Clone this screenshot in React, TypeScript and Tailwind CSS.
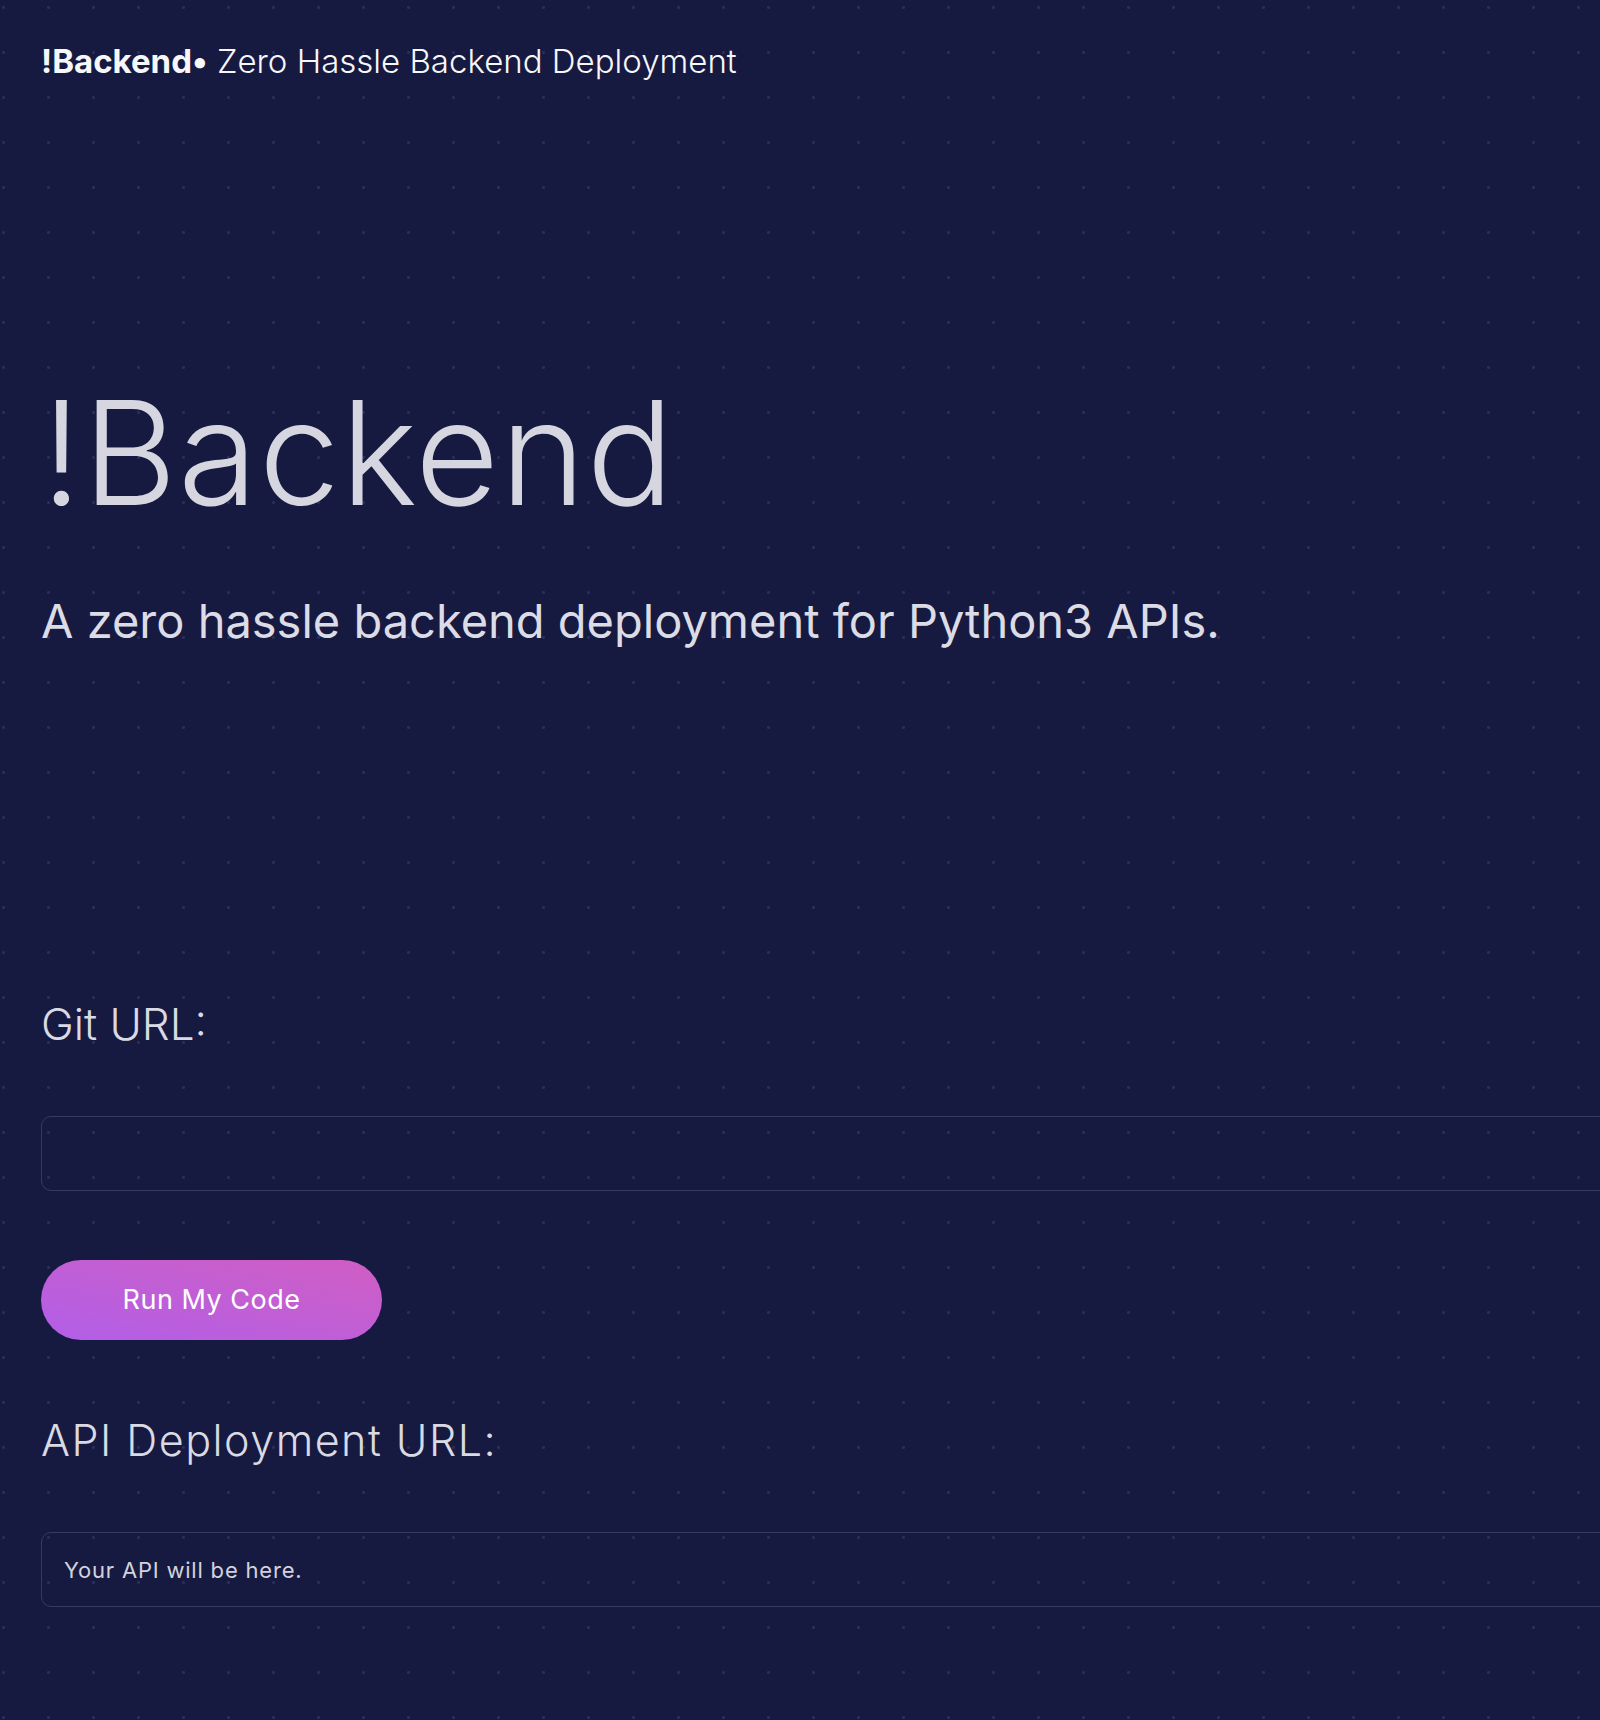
import React, { useState } from 'react';

const font = { fontFamily: 'Inter, "Noto Sans", sans-serif' };

const App: React.FC = () => {
  const [gitUrl, setGitUrl] = useState('');

  return (
    <div
      style={font}
      className="min-h-[1720px] w-full overflow-hidden bg-[#171a40] bg-[radial-gradient(circle,#2a2e58_1.2px,transparent_1.8px)] bg-[size:45px_45px] bg-[position:-19px_-15px] px-[41px]"
    >
      {/* Header */}
      <header className="pt-[45px] text-[33px] leading-none text-[#f7f7fa] whitespace-nowrap">
        <span className="font-bold">!Backend•</span>
        <span className="font-light"> Zero Hassle Backend Deployment</span>
      </header>

      {/* Hero */}
      <h1 className="mt-[302px] text-[145px] leading-none font-light text-[#d6d6e1] tracking-[1px]">
        !Backend
      </h1>
      <p className="mt-[72px] text-[47px] leading-none text-[#dcdce6] whitespace-nowrap">
        A zero hassle backend deployment for Python3 APIs.
      </p>

      {/* Git URL */}
      <label className="block mt-[358px] text-[44px] leading-none font-light text-[#dadae4]">
        Git URL:
      </label>
      <input
        type="text"
        value={gitUrl}
        onChange={(e) => setGitUrl(e.target.value)}
        className="block mt-[70px] h-[75px] w-[1600px] rounded-[10px] border border-[#363a62] bg-transparent px-[22px] text-[22px] text-[#d0d0dc] outline-none"
      />

      <button className="mt-[69px] flex h-[80px] w-[341px] items-center justify-center rounded-full bg-linear-to-tr from-[#b15ee8] to-[#d05dc3] text-[27px] tracking-[0.5px] text-white">
        Run My Code
      </button>

      {/* API output */}
      <label className="block mt-[79px] text-[43px] leading-none font-light tracking-[1.5px] text-[#dadae4] whitespace-nowrap">
        API Deployment URL:
      </label>
      <div className="mt-[70px] flex h-[75px] w-[1600px] items-center rounded-[10px] border border-[#363a62] px-[22px] text-[22px] leading-none tracking-[0.8px] text-[#d2d2de]">
        Your API will be here.
      </div>
    </div>
  );
};

export default App;
